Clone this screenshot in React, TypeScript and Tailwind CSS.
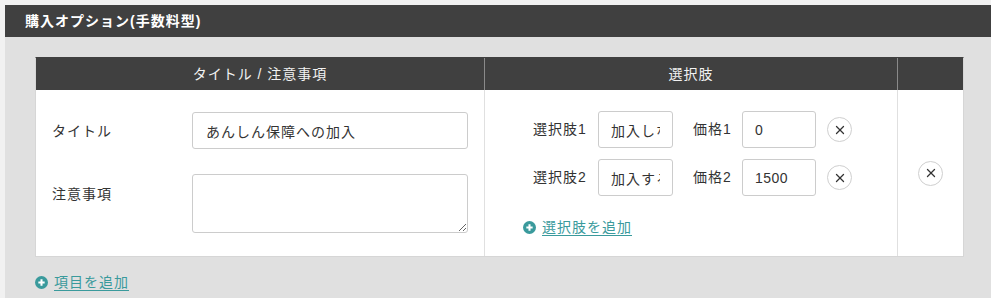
import React from "react"

const FONT = "font-['Liberation_Sans','Noto_Sans_CJK_JP',sans-serif]"

function CloseButton() {
  return (
    <button
      type="button"
      className="flex h-[25px] w-[25px] shrink-0 items-center justify-center rounded-full border border-[#cfcfcf] bg-white"
    >
      <svg width="10" height="10" viewBox="0 0 10 10" stroke="#333" strokeWidth="1.3" strokeLinecap="round">
        <line x1="1.5" y1="1.5" x2="8.5" y2="8.5" />
        <line x1="8.5" y1="1.5" x2="1.5" y2="8.5" />
      </svg>
    </button>
  )
}

function AddLink({ label }: { label: string }) {
  return (
    <a href="#" className="inline-flex items-center gap-[6px] text-[14px] tracking-[1px] text-[#3a9a9c]">
      <svg width="13" height="13" viewBox="0 0 14 14">
        <circle cx="7" cy="7" r="7" fill="#3a9a9c" />
        <path d="M7 3.6v6.8M3.6 7h6.8" stroke="#fff" strokeWidth="2.2" />
      </svg>
      <span className="underline underline-offset-[3px]">{label}</span>
    </a>
  )
}

const CHOICES = [
  { label: "選択肢1", value: "加入しない", priceLabel: "価格1", price: "0" },
  { label: "選択肢2", value: "加入する", priceLabel: "価格2", price: "1500" },
]

export default function App() {
  return (
    <div className={`${FONT} h-[298px] w-[991px] overflow-hidden bg-[#f1f1f1] pl-[5px] pt-[5px] text-[14px] tracking-[1px] text-[#333]`}>
      {/* Panel header */}
      <div className="flex h-[32px] items-center bg-[#404040] px-[20px] text-[14px] font-bold text-white">
        購入オプション(手数料型)
      </div>

      {/* Panel body */}
      <div className="h-[261px] bg-[#e0e0e0] pl-[30px] pr-[27px] pt-[20px]">
        <div className="border border-[#d6d6d6] border-t-[#404040] bg-white">
          {/* Table header */}
          <div className="flex h-[32px] bg-[#404040] text-[14px] text-[#f2f2f2]">
            <div className="flex w-[449px] items-center justify-center border-r border-[#8a8a8a]">タイトル / 注意事項</div>
            <div className="flex w-[413px] items-center justify-center border-r border-[#8a8a8a]">選択肢</div>
            <div className="flex-1" />
          </div>

          {/* Table row */}
          <div className="flex h-[166px]">
            <div className="flex w-[449px] flex-col gap-[25px] border-r border-[#e0e0e0] pl-[16px] pt-[22px]">
              <div className="flex items-center">
                <span className="w-[140px] pt-[2px]">タイトル</span>
                <input
                  readOnly
                  value="あんしん保障への加入"
                  className="h-[37px] w-[276px] rounded-[3px] border border-[#cccccc] px-[13px] text-[14px] tracking-[1px] text-[#333] outline-none"
                />
              </div>
              <div className="flex items-start">
                <span className="w-[140px] pt-[10px]">注意事項</span>
                <textarea className="h-[59px] w-[276px] rounded-[3px] border border-[#cccccc] px-[13px] text-[14px] outline-none" />
              </div>
            </div>

            <div className="flex w-[413px] flex-col justify-center border-r border-[#e0e0e0] pl-[38px] pt-[5px]">
              <div className="flex flex-col gap-[11px] pl-[10px]">
                {CHOICES.map((c) => (
                  <div key={c.label} className="flex items-center">
                    <span className="w-[65px]">{c.label}</span>
                    <input
                      readOnly
                      value={c.value}
                      className="h-[37px] w-[75px] rounded-[3px] border border-[#cccccc] px-[12px] text-[14px] tracking-[1px] text-[#333] outline-none"
                    />
                    <span className="ml-[20px] w-[49px]">{c.priceLabel}</span>
                    <input
                      readOnly
                      value={c.price}
                      className="h-[37px] w-[74px] rounded-[3px] border border-[#cccccc] px-[12px] text-[14px] tracking-[0.5px] text-[#333] outline-none"
                    />
                    <div className="ml-[11px]">
                      <CloseButton />
                    </div>
                  </div>
                ))}
              </div>
              <div className="mt-[21px]">
                <AddLink label="選択肢を追加" />
              </div>
            </div>

            <div className="flex flex-1 items-center justify-center">
              <CloseButton />
            </div>
          </div>
        </div>

        <div className="mt-[15px]">
          <AddLink label="項目を追加" />
        </div>
      </div>
    </div>
  )
}
